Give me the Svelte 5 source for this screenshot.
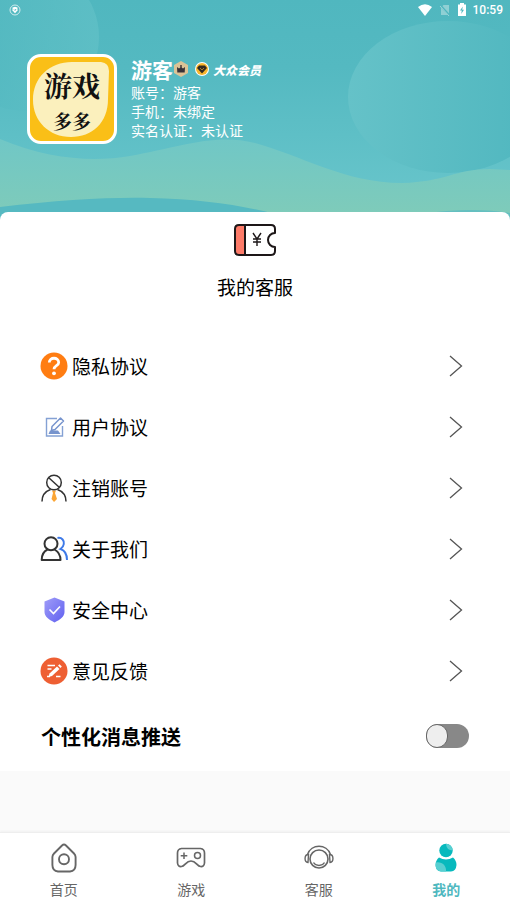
<script>
    let push = $state(false);
    let current = $state("mine");

    const info = [
        { label: "账号", value: "游客" },
        { label: "手机", value: "未绑定" },
        { label: "实名认证", value: "未认证" }
    ];

    const menu = [
        { id: "privacy", text: "隐私协议" },
        { id: "terms", text: "用户协议" },
        { id: "cancel", text: "注销账号" },
        { id: "about", text: "关于我们" },
        { id: "safety", text: "安全中心" },
        { id: "feedback", text: "意见反馈" }
    ];

    const tabs = [
        { id: "home", text: "首页" },
        { id: "game", text: "游戏" },
        { id: "service", text: "客服" },
        { id: "mine", text: "我的" }
    ];
</script>

<div class="page">
    <header class="hero">
        <svg class="waves" viewBox="0 0 510 222" preserveAspectRatio="none" aria-hidden="true">
            <defs>
                <linearGradient id="sky" x1="0" y1="0" x2="0" y2="1">
                    <stop offset="0" stop-color="#50b7bf" />
                    <stop offset="0.3" stop-color="#54b9c1" />
                    <stop offset="0.85" stop-color="#66c4ca" />
                    <stop offset="1" stop-color="#66c4ca" />
                </linearGradient>
                <linearGradient id="moon" x1="0" y1="0" x2="1" y2="0">
                    <stop offset="0" stop-color="#65c2c8" />
                    <stop offset="0.85" stop-color="#52b8c0" />
                </linearGradient>
                <linearGradient id="corner" x1="0" y1="0" x2="1" y2="0">
                    <stop offset="0" stop-color="#50b7bf" />
                    <stop offset="1" stop-color="#62c1c7" />
                </linearGradient>
                <linearGradient id="hill" x1="0" y1="138" x2="0" y2="212" gradientUnits="userSpaceOnUse">
                    <stop offset="0" stop-color="#70c7c6" />
                    <stop offset="1" stop-color="#7ecbba" />
                </linearGradient>
            </defs>
            <rect width="510" height="222" fill="url(#sky)" />
            <circle cx="25" cy="37" r="74" fill="url(#corner)" opacity="0.7" />
            <ellipse cx="448" cy="97" rx="100" ry="76" fill="url(#moon)" />
            <path d="M0 139C50 160 94 162 130 156C180 147 215 133 255 143C300 155 345 183 402 183C445 182 455 169 490 169L510 170V222H0Z" fill="url(#hill)" />
            <path d="M0 207C60 200 110 197 150 198C200 199 240 205 275 214V222H0Z" fill="#56b9c1" />
            <path d="M420 214C455 209 485 209 510 213V222H420Z" fill="#64bfc0" />
        </svg>

        <div class="front">
            <div class="status">
                <svg width="12" height="12" viewBox="0 0 12 12">
                    <circle cx="6" cy="6" r="5" fill="none" stroke="#cfecee" />
                    <path d="M3.5 3.5L6 2.8L8.500 3.5V6.500L6 9.200L3.500 6.500Z" fill="#fff" />
                    <path d="M5 5.500L6 6.500L7 5" fill="none" stroke="#56b9c1" />
                </svg>
                <span class="right">
                    <svg width="16" height="12" viewBox="0 0 16 12"><path d="M8 12L1 3Q8 -2.500 15 3Z" fill="#fff" /></svg>
                    <svg width="12" height="12" viewBox="0 0 12 12">
                        <path d="M4.500 1H10V11H2V3.500Z" fill="#8fd0d4" />
                        <path d="M1 1L11 12" stroke="#50b7bf" stroke-width="2" />
                        <path d="M1 2L10 12" stroke="#9bd5d9" />
                    </svg>
                    <svg width="10" height="14" viewBox="0 0 10 14">
                        <path d="M3 0H7V1.500H9V13H1V1.500H3Z" fill="#fff" />
                        <path d="M5.800 3.500L3 7.500H4.800L4.200 11L7 6.800H5.200Z" fill="#50b7bf" />
                    </svg>
                    <time>10:59</time>
                </span>
            </div>

            <div class="profile">
                <div class="avatar">
                    <svg class="leaf" viewBox="0 0 84 84" aria-hidden="true">
                        <path d="M42 5H71Q79 6 79 14L78 42C78 66 62 80 41 80C19 80 3 64 3 43C3 20 20 5 42 5Z" fill="#fbf0bd" />
                    </svg>
                    <div class="brand">
                        <span class="big">游戏</span>
                        <span class="small">多多</span>
                    </div>
                </div>
                <div class="who">
                    <div class="name">
                        <h1>游客</h1>
                        <svg width="16" height="16" viewBox="0 0 16 16">
                            <path d="M8 0L15 4V12L8 16L1 12V4Z" fill="#dcc396" />
                            <path d="M4 6L6 7.500L7.300 6.500V4H8.700V6.500L10 7.500L12 6L11.700 11.500H4.300Z" fill="#383238" />
                        </svg>
                        <svg class="medal" width="14" height="14" viewBox="0 0 14 14">
                            <circle cx="7" cy="7" r="7" fill="#fff" />
                            <circle cx="7" cy="7" r="6" fill="#f8b52c" />
                            <path d="M4 3.500H10L12 6L7 11.500L2 6Z" fill="#352a20" />
                            <path d="M5 6L7 8L9 6" fill="none" stroke="#a87a2c" />
                        </svg>
                        <span class="vip">大众会员</span>
                    </div>
                    {#each info as item}
                        <p>{item.label}：{item.value}</p>
                    {/each}
                </div>
            </div>
        </div>
    </header>

    <main class="card">
        <button class="ticket">
            <svg width="44" height="34" viewBox="0 0 44 34">
                <path d="M12 2H6Q2 2 2 6V28Q2 32 6 32H12Z" fill="#fd7b69" />
                <path d="M6 2H38Q42 2 42 6V10A7 7 0 0 0 42 24V28Q42 32 38 32H6Q2 32 2 28V6Q2 2 6 2ZM12 2V32" fill="none" stroke="#1d1718" stroke-width="2" stroke-linejoin="round" />
                <path d="M20 10L24 16L28 10M20 16H28M20 19H28M24 16V23" fill="none" stroke="#1d1718" stroke-width="1.400" />
            </svg>
            <span>我的客服</span>
        </button>

        <nav class="menu">
            {#each menu as item}
                <a href="#{item.id}">
                    <svg class="icon" viewBox="0 0 28 28" aria-hidden="true">
                        {#if item.id == "privacy"}
                            <circle cx="14" cy="14" r="13.500" fill="#ff7d12" />
                            <path d="M9.300 10.500C9.300 4.800 18.700 4.800 18.700 10.500C18.700 13.800 14 13.600 14 17.300" fill="none" stroke="#fff" stroke-width="2.800" />
                            <circle cx="14" cy="21.300" r="1.900" fill="#fff" />
                        {:else if item.id == "terms"}
                            <path d="M17 5.500H6.500V23H22.500V13" fill="none" stroke="#84a1d4" stroke-width="1.400" />
                            <path d="M12 13.500L20.500 5L23.500 8L15 16.500L11.500 17.500Z" fill="#fff" stroke="#7794cd" stroke-width="1.500" stroke-linejoin="round" />
                            <path d="M8.500 21L10 17.500H18L20.500 21Z" fill="#7794cd" />
                        {:else if item.id == "cancel"}
                            <path d="M12 16.500H16L15 19L17 25L14 28L11.500 25L13 19Z" fill="#fba535" />
                            <circle cx="14" cy="8.500" r="7.300" fill="none" stroke="#333" stroke-width="1.500" />
                            <path d="M8.500 3.500L19.500 13.500M2 27.500C2 21.500 5 17.500 10.500 15.500M26 27.500C26 21.500 23 17.500 17.500 15.500" fill="none" stroke="#333" stroke-width="1.500" />
                        {:else if item.id == "about"}
                            <path d="M17.500 3C22 2 24.500 6 23.800 9C23.500 11.500 22 13 20.500 14C25 15.500 27 19 27 25" fill="none" stroke="#3e7ae8" stroke-width="2" />
                            <circle cx="11" cy="8.700" r="6.500" fill="#fff" stroke="#333" stroke-width="2" />
                            <path d="M7.500 14.500C3.500 16.500 1.700 20 1.700 25H20.500C20.500 20 18 16.500 14.500 14.500" fill="none" stroke="#333" stroke-width="2" stroke-linejoin="round" />
                        {:else if item.id == "safety"}
                            <defs>
                                <linearGradient id="shield" x1="0" y1="0" x2="1" y2="1">
                                    <stop offset="0" stop-color="#a09df8" />
                                    <stop offset="1" stop-color="#6060f0" />
                                </linearGradient>
                            </defs>
                            <path d="M14.500 1.500L24.500 5.500V16C24.500 20.500 20.500 23.500 14.500 26.500C8.500 23.500 4.500 20.500 4.500 16V5.500Z" fill="url(#shield)" />
                            <path d="M9.500 13.500L13.500 17.500L20 10.500" fill="none" stroke="#fff" stroke-width="1.600" />
                        {:else}
                            <circle cx="14" cy="14" r="13.500" fill="#ee5f33" />
                            <path d="M7.500 8.500H15M7.500 12H11.500M16 19.500H20.500M7 19.500H10" fill="none" stroke="#fff" stroke-width="1.700" />
                            <path d="M9.500 16.500L17 9.500L19.500 12L12 19L8.500 20Z" fill="#fff" />
                            <path d="M18 8.500L19.500 7.200L21.800 9.500L20.500 11Z" fill="#fff" />
                        {/if}
                    </svg>
                    <span>{item.text}</span>
                    <svg class="arrow" viewBox="0 0 14 22" aria-hidden="true"><path d="M1 1L12.500 11L1 21" fill="none" stroke="#555" stroke-width="1.300" /></svg>
                </a>
            {/each}
        </nav>

        <label class="push">
            <span>个性化消息推送</span>
            <input type="checkbox" role="switch" bind:checked={push} />
        </label>
    </main>

    <nav class="tabbar">
        {#each tabs as tab}
            <button class:active={current == tab.id} onclick={() => (current = tab.id)}>
                <svg width="32" height="32" viewBox="0 0 32 32" fill="none" stroke="#666" aria-hidden="true">
                    {#if tab.id == "home"}
                        <path d="M14 3.500Q16 1.700 18 3.500L26 11.500Q27.500 13 27.600 15V23Q27.500 29 22 29.500H10Q4.500 29 4.400 23V15Q4.500 13 6 11.500Z" stroke-width="1.900" />
                        <circle cx="16" cy="17.300" r="5" stroke-width="1.900" />
                    {:else if tab.id == "game"}
                        <path d="M6.500 6.500H25.500Q29.500 7 29.500 11V21Q29 25 25.500 24.500C22 24 21 19 16 19C11 19 10 24 6.500 24.500Q3 25 2.500 21V11Q2.500 7 6.500 6.500Z" stroke-width="1.700" />
                        <path d="M9 10.500V17M5.700 13.700H12.300" stroke-width="1.500" />
                        <circle cx="22.500" cy="13.500" r="3" stroke-width="1.500" />
                    {:else if tab.id == "service"}
                        <circle cx="16" cy="17" r="9" stroke-width="1.600" />
                        <path d="M4.500 12.500C8 1.500 24 1.500 27.500 12.500M10.500 20.500C13 24.500 19 24.500 21.500 20.500" stroke-width="1.400" />
                        <path d="M5.500 12.500C1 12.500 1 20 5 20.500ZM26.500 12.500C31 12.500 31 20 27 20.500Z" stroke-width="1.400" />
                    {:else}
                        <g stroke="none">
                            <circle cx="16" cy="8.500" r="6.700" fill="#07b9bd" />
                            <path d="M16 1.800A6.700 6.700 0 0 1 22.700 8.500Q16.500 8.500 16 1.800Z" fill="#58cfd1" />
                            <path d="M9 15.500Q16 19.500 23 15.500Q26.500 18.500 26.500 23Q26 29 21 29.500H11Q6 29 5.500 23Q5.500 18.500 9 15.500Z" fill="#07b9bd" />
                            <path d="M6 20.500C12 19.500 16.500 23.500 16 29.500H11Q4 28.500 6 20.500Z" fill="#58cfd1" />
                        </g>
                    {/if}
                </svg>
                <span>{tab.text}</span>
            </button>
        {/each}
    </nav>
</div>

<style>
    :global(body) {
        margin: 0;
        background: #fafafa;
    }

    .page {
        display: flex;
        flex-direction: column;
        min-height: 100vh;
        font-family: Roboto, "Noto Sans CJK SC", sans-serif;
        color: #000;
    }

    .page svg {
        flex: none;
        display: block;
    }

    button {
        border: none;
        background: none;
        padding: 0;
        font: inherit;
        color: inherit;
        cursor: pointer;
    }

    .hero {
        display: grid;
        height: 222px;
        color: #fff;
    }

    .waves,
    .front {
        grid-area: 1 / 1;
        width: 100%;
        height: 222px;
    }

    .front {
        z-index: 1;
    }

    .status {
        display: flex;
        justify-content: space-between;
        align-items: center;
        height: 20px;
        padding: 0 7px 0 9px;
    }

    .right {
        display: flex;
        align-items: center;
        gap: 6px;
        font-size: 12px;
        font-weight: 500;
    }

    .profile {
        display: flex;
        gap: 14px;
        padding: 34px 27px 0;
    }

    .avatar {
        display: grid;
        flex: none;
        box-sizing: border-box;
        width: 90px;
        height: 90px;
        border: 3px solid #fff;
        border-radius: 14px;
        background: #fabf17;
        color: #111;
    }

    .leaf,
    .brand {
        grid-area: 1 / 1;
    }

    .brand {
        display: flex;
        flex-direction: column;
        align-items: center;
        gap: 4px;
        padding-top: 12px;
        font-family: "Noto Serif CJK SC", "Noto Sans CJK SC", serif;
        font-weight: 700;
    }

    .big {
        font-size: 28px;
        line-height: 32px;
    }

    .small {
        font-size: 19px;
        line-height: 32px;
    }

    .name {
        display: flex;
        align-items: center;
        height: 30px;
    }

    h1 {
        margin: 0;
        font-size: 21px;
        font-weight: 700;
    }

    .medal {
        margin: 0 4px 0 6px;
    }

    .vip {
        font-size: 12px;
        font-style: italic;
        font-weight: 900;
    }

    .who p {
        margin: 0;
        font-size: 14px;
        line-height: 19px;
    }

    .card {
        z-index: 1;
        margin-top: -10px;
        border-radius: 8px 8px 0 0;
        background: #fff;
    }

    .ticket {
        display: flex;
        flex-direction: column;
        align-items: center;
        gap: 18px;
        width: 100%;
        height: 123px;
        padding-top: 11px;
        font-size: 19px;
        line-height: 28px;
    }

    .menu a {
        display: flex;
        align-items: center;
        gap: 4px;
        height: 61px;
        padding: 0 47px 0 40px;
        color: inherit;
        font-size: 19px;
        text-decoration: none;
    }

    .icon {
        width: 28px;
        height: 28px;
    }

    .arrow {
        width: 14px;
        height: 22px;
        margin-left: auto;
    }

    .push {
        display: flex;
        justify-content: space-between;
        align-items: center;
        height: 70px;
        padding: 0 41px;
        font-size: 20px;
        font-weight: 700;
    }

    .push input {
        appearance: none;
        display: flex;
        width: 43px;
        height: 24px;
        margin: 0;
        border-radius: 12px;
        background: #888;
    }

    .push input::before {
        content: "";
        box-sizing: border-box;
        width: 22px;
        height: 24px;
        border: 1px solid #666;
        border-radius: 12px;
        background: #eee;
    }

    .push input:checked {
        justify-content: flex-end;
        background: #07b9bd;
    }

    .tabbar {
        display: flex;
        height: 75px;
        margin-top: auto;
        border-top: 1px solid #eee;
        background: #fff;
        box-shadow: 0 -1px 2px rgba(0, 0, 0, 0.04);
    }

    .tabbar button {
        display: flex;
        flex: 1;
        flex-direction: column;
        align-items: center;
        gap: 6px;
        padding-top: 9px;
        color: #666;
        font-size: 14px;
        line-height: 20px;
    }

    .tabbar .active {
        color: #4fb8bf;
        font-weight: 700;
    }
</style>
